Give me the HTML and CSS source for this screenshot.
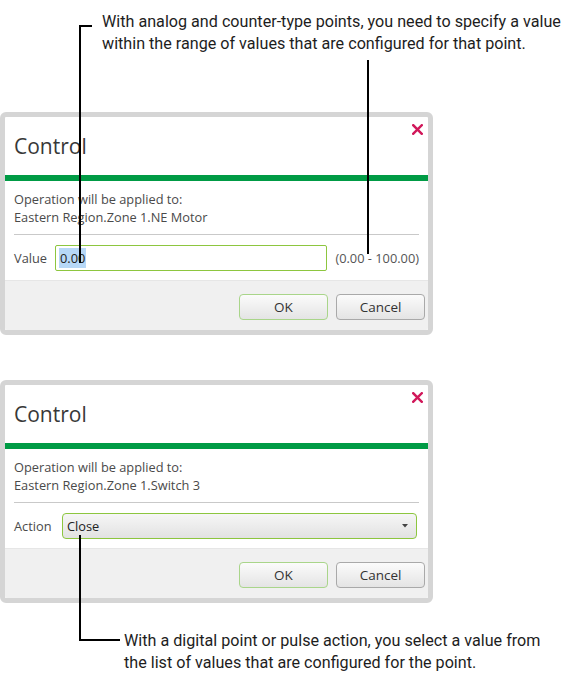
FILE: index.html
```html
<!DOCTYPE html>
<html lang="en">
<head>
<meta charset="utf-8">
<title>Control dialogs</title>
<link rel="stylesheet" href="styles.css">
</head>
<body>
<main class="page">
  <p class="note note-top">With analog and counter-type points, you need to specify a value<br>within the range of values that are configured for that point.</p>

  <section class="dialog dialog-first">
    <header class="dlg-head">
      <h2 class="dlg-title">Control</h2>
      <span class="dlg-close" aria-label="Close"><svg viewBox="0 0 11 11" width="11" height="11"><path d="M1.2 1.2 L9.8 9.8 M9.8 1.2 L1.2 9.8" stroke="#d1185a" stroke-width="2.4" stroke-linecap="square" fill="none"/></svg></span>
    </header>
    <div class="dlg-bar"></div>
    <div class="dlg-body">
      <p class="dlg-target">Operation will be applied to:<br>Eastern Region.Zone 1.NE Motor</p>
      <div class="dlg-row row-value">
        <span class="dlg-label">Value</span>
        <span class="text-input"><span class="selected">0.00</span></span>
        <span class="range">(0.00 - 100.00)</span>
      </div>
    </div>
    <footer class="dlg-foot">
      <span class="btn btn-ok">OK</span>
      <span class="btn">Cancel</span>
    </footer>
  </section>

  <section class="dialog dialog-second">
    <header class="dlg-head">
      <h2 class="dlg-title">Control</h2>
      <span class="dlg-close" aria-label="Close"><svg viewBox="0 0 11 11" width="11" height="11"><path d="M1.2 1.2 L9.8 9.8 M9.8 1.2 L1.2 9.8" stroke="#d1185a" stroke-width="2.4" stroke-linecap="square" fill="none"/></svg></span>
    </header>
    <div class="dlg-bar"></div>
    <div class="dlg-body">
      <p class="dlg-target">Operation will be applied to:<br>Eastern Region.Zone 1.Switch 3</p>
      <div class="dlg-row row-action">
        <span class="dlg-label">Action</span>
        <span class="select"><span class="select-text">Close</span><svg class="caret" viewBox="0 0 6 4" width="6" height="4"><path d="M0 0 H6 L3 3.5 Z" fill="#444"/></svg></span>
      </div>
    </div>
    <footer class="dlg-foot">
      <span class="btn btn-ok">OK</span>
      <span class="btn">Cancel</span>
    </footer>
  </section>

  <p class="note note-bottom">With a digital point or pulse action, you select a value from<br>the list of values that are configured for the point.</p>

  <span class="leader lead-a-h"></span>
  <span class="leader lead-a-v"></span>
  <span class="leader lead-b-v"></span>
  <span class="leader lead-c-v"></span>
  <span class="leader lead-c-h"></span>
</main>
</body>
</html>
```
FILE: styles.css
```css
html, body {
  margin: 0;
  padding: 0;
  background: #ffffff;
}

.page {
  position: relative;
  width: 578px;
  height: 691px;
  overflow: hidden;
}

.note {
  margin: 0;
  font-family: Roboto, "Liberation Sans", sans-serif;
  font-size: 16.15px;
  line-height: 22px;
  color: #1d1d1d;
  white-space: nowrap;
}

.note-top {
  padding: 11px 0 0 102px;
}

.note-bottom {
  padding: 27px 0 0 124px;
}

.dialog {
  width: 423px;
  border: 5px solid #d5d5d5;
  border-radius: 6px;
  background: #ffffff;
  font-family: "Open Sans", "Liberation Sans", sans-serif;
  color: #444444;
}

.dialog-first {
  margin-top: 57px;
}

.dialog-second {
  margin-top: 45px;
}

.dlg-head {
  display: flex;
  justify-content: space-between;
  align-items: flex-start;
  height: 58px;
  padding: 0 5px 0 9px;
}

.dlg-title {
  margin: 16px 0 0;
  font-size: 21px;
  font-weight: 400;
  line-height: 26px;
  color: #383838;
}

.dlg-close {
  display: block;
  width: 11px;
  height: 11px;
  margin-top: 7px;
}

.dlg-close svg {
  display: block;
}

.dlg-bar {
  height: 6px;
  background: #009b45;
}

.dlg-body {
  padding: 9px 9px 9px;
}

.dlg-target {
  margin: 0;
  padding-bottom: 8px;
  border-bottom: 1px solid #c9c9c9;
  font-size: 12.8px;
  line-height: 18px;
  color: #4a4a4a;
}

.dlg-row {
  display: flex;
  align-items: center;
  height: 26px;
  margin-top: 10px;
  font-size: 12.8px;
  color: #4a4a4a;
}

.row-value .dlg-label {
  width: 41px;
}

.row-action .dlg-label {
  width: 48px;
}

.text-input {
  box-sizing: border-box;
  flex: 1;
  height: 26px;
  border: 1.5px solid #8dc63f;
  border-radius: 2px;
  padding: 2px 3px;
  display: flex;
  align-items: center;
  margin-right: 8px;
  background: #ffffff;
}

.selected {
  background: #b7d8f7;
  color: #222222;
  line-height: 20px;
  padding: 0 1px;
}

.range {
  color: #555555;
  white-space: nowrap;
}

.select {
  box-sizing: border-box;
  flex: 1;
  height: 26px;
  margin-right: 2px;
  border: 1.5px solid #8dc63f;
  border-radius: 4px;
  padding: 0 8px 0 4px;
  display: flex;
  align-items: center;
  justify-content: space-between;
  background: linear-gradient(#f6f6f6, #e2e2e2);
}

.select-text {
  color: #222222;
}

.caret {
  display: block;
}

.dlg-foot {
  display: flex;
  justify-content: flex-end;
  gap: 8px;
  padding: 13px 3px 10px;
  border-top: 1px solid #e6e6e6;
  background: #f0f0f0;
  border-radius: 0 0 2px 2px;
}

.btn {
  box-sizing: border-box;
  width: 89px;
  height: 26px;
  display: flex;
  align-items: center;
  justify-content: center;
  border: 1px solid #a9a9a9;
  border-radius: 4px;
  background: linear-gradient(#fbfbfb, #e4e4e4);
  font-size: 13.5px;
  color: #333333;
}

.btn-ok {
  border-color: #a9d58a;
}

.leader {
  position: absolute;
  background: #000000;
}

.lead-a-h {
  left: 79px;
  top: 25px;
  width: 13px;
  height: 2px;
}

.lead-a-v {
  left: 79px;
  top: 25px;
  width: 2px;
  height: 238px;
}

.lead-b-v {
  left: 367px;
  top: 60px;
  width: 2px;
  height: 194px;
}

.lead-c-v {
  left: 79px;
  top: 535px;
  width: 2px;
  height: 106px;
}

.lead-c-h {
  left: 79px;
  top: 639px;
  width: 41px;
  height: 2px;
}
```
